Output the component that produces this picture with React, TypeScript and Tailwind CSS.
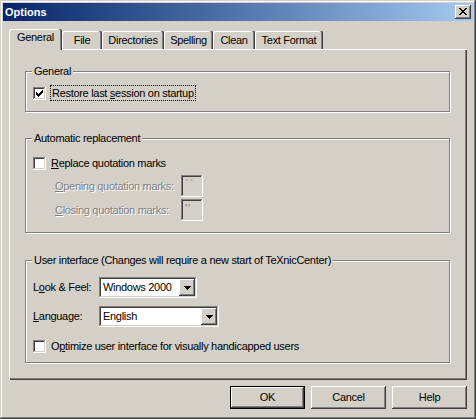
import React from "react";

const raised =
  "shadow-[inset_-1px_-1px_#404040,inset_1px_1px_#ffffff,inset_-2px_-2px_#808080,inset_2px_2px_#d4d0c8]";
const sunken =
  "shadow-[inset_-1px_-1px_#ffffff,inset_1px_1px_#808080,inset_-2px_-2px_#d4d0c8,inset_2px_2px_#404040]";
const etched = "border border-[#808080] shadow-[inset_1px_1px_#ffffff,1px_1px_#ffffff]";

const CheckBox: React.FC<{ checked?: boolean }> = ({ checked }) => (
  <div className={`w-[13px] h-[13px] shrink-0 bg-white ${sunken}`}>
    {checked && (
      <svg width="13" height="13" viewBox="0 0 13 13" shapeRendering="crispEdges">
        <path
          d="M3 5h1v3H3zM4 6h1v3H4zM5 7h1v3H5zM6 6h1v3H6zM7 5h1v3H7zM8 4h1v3H8zM9 3h1v3H9z"
          fill="#000"
        />
      </svg>
    )}
  </div>
);

const Group: React.FC<{ title: string; className: string; children: React.ReactNode }> = ({
  title,
  className,
  children,
}) => (
  <div className={`relative ml-[16px] w-[425px] ${etched} ${className}`}>
    <span className="absolute -top-[7px] left-[6px] px-[2px] bg-[#d4d0c8] leading-[13px] whitespace-nowrap">
      {title}
    </span>
    {children}
  </div>
);

const Combo: React.FC<{ value: string; width: string }> = ({ value, width }) => (
  <div className={`${width} h-[21px] bg-white ${sunken} flex items-center pl-[4px] pr-[2px]`}>
    <span className="flex-1 leading-[13px] whitespace-nowrap">{value}</span>
    <div className={`w-[16px] h-[17px] bg-[#d4d0c8] ${raised} flex items-center justify-center`}>
      <svg width="7" height="4" viewBox="0 0 7 4" shapeRendering="crispEdges">
        <path d="M0 0h7v1H0zM1 1h5v1H1zM2 2h3v1H2zM3 3h1v1H3z" fill="#000" />
      </svg>
    </div>
  </div>
);

const QuoteBox: React.FC<{ value: string }> = ({ value }) => (
  <div
    className={`w-[22px] h-[22px] bg-[#d4d0c8] ${sunken} pl-[4px] pt-[3px] text-[#808080] tracking-[1px] [text-shadow:none]`}
  >
    {value}
  </div>
);

const tabs = ["File", "Directories", "Spelling", "Clean", "Text Format"];
const tabWidths = ["w-[40px]", "w-[62px]", "w-[49px]", "w-[42px]", "w-[68px]"];

export default function App() {
  return (
    <div
      className={`w-[476px] h-[419px] bg-[#d4d0c8] p-[3px] flex flex-col text-[11px] leading-[13px] text-black tracking-[-0.3px] font-['Liberation_Sans',Arial,sans-serif] shadow-[inset_-1px_-1px_#404040,inset_1px_1px_#d4d0c8,inset_-2px_-2px_#808080,inset_2px_2px_#ffffff] select-none`}
    >
      {/* Title bar */}
      <div className="h-[18px] flex items-center justify-between pl-[2px] pr-[2px] bg-linear-to-r from-[#0a246a] to-[#a6caf0]">
        <span className="text-white font-bold tracking-normal">Options</span>
        <div className={`w-[16px] h-[14px] bg-[#d4d0c8] ${raised} flex justify-center pt-[3px]`}>
          <svg width="8" height="7" viewBox="0 0 8 7" shapeRendering="crispEdges">
            <path
              d="M0 0h2v1H0zM6 0h2v1H6zM1 1h2v1H1zM5 1h2v1H5zM2 2h4v1H2zM3 3h2v1H3zM2 4h4v1H2zM1 5h2v1H1zM5 5h2v1H5zM0 6h2v1H0zM6 6h2v1H6z"
              fill="#000"
            />
          </svg>
        </div>
      </div>

      <div className="mt-[8px] px-[6px] flex flex-col">
        {/* Tabs */}
        <div className="flex items-end h-[20px]">
          <div className="relative z-10 w-[53px] h-[21px] -mb-[1px] bg-[#d4d0c8] rounded-t-[2px] pt-[2px] text-center shadow-[inset_-1px_0_#404040,inset_-2px_0_#808080,inset_1px_1px_#ffffff]">
            General
          </div>
          {tabs.map((t, i) => (
            <div
              key={t}
              className={`${tabWidths[i]} h-[18px] rounded-t-[2px] pt-[3px] text-center whitespace-nowrap shadow-[inset_-1px_0_#404040,inset_-2px_0_#808080,inset_1px_1px_#ffffff]`}
            >
              {t}
            </div>
          ))}
        </div>

        {/* Panel */}
        <div className="h-[331px] flex flex-col shadow-[inset_1px_1px_#ffffff,inset_-1px_-1px_#404040,inset_-2px_-2px_#808080]">
          <Group title="General" className="mt-[22px] h-[41px] pt-[13px] pl-[7px]">
            <div className="flex items-start">
              <div className="mt-[2px]">
                <CheckBox checked />
              </div>
              <div className="ml-[4px] border border-dotted border-black px-[1px] leading-[14px]">
                Restore last <u>s</u>ession on startup
              </div>
            </div>
          </Group>

          <Group title="Automatic replacement" className="mt-[26px] h-[95px] pt-[18px] pl-[7px]">
            <div className="flex items-center h-[13px]">
              <CheckBox />
              <span className="ml-[5px]">
                <u>R</u>eplace quotation marks
              </span>
            </div>
            <div className="mt-[5px] ml-[22px] flex items-center h-[22px] text-[#808080] [text-shadow:1px_1px_0_#ffffff]">
              <span className="w-[126px]">
                <u>O</u>pening quotation marks:
              </span>
              <QuoteBox value="``" />
            </div>
            <div className="mt-[2px] ml-[22px] flex items-center h-[22px] text-[#808080] [text-shadow:1px_1px_0_#ffffff]">
              <span className="w-[126px]">
                <u>C</u>losing quotation marks:
              </span>
              <QuoteBox value="''" />
            </div>
          </Group>

          <Group
            title="User interface (Changes will require a new start of TeXnicCenter)"
            className="mt-[27px] h-[103px] pt-[16px] pl-[7px]"
          >
            <div className="flex items-center">
              <span className="w-[66px]">
                L<u>o</u>ok &amp; Feel:
              </span>
              <Combo value="Windows 2000" width="w-[98px]" />
            </div>
            <div className="mt-[8px] flex items-center">
              <span className="w-[66px]">
                <u>L</u>anguage:
              </span>
              <Combo value="English" width="w-[120px]" />
            </div>
            <div className="mt-[13px] flex items-center h-[13px]">
              <CheckBox />
              <span className="ml-[5px]">
                O<u>p</u>timize user interface for visually handicapped users
              </span>
            </div>
          </Group>
        </div>

        {/* Buttons */}
        <div className="mt-[6px] flex justify-end gap-[6px]">
          <div className="w-[75px] h-[23px] border border-black">
            <div className={`w-full h-full flex items-center justify-center ${raised}`}>OK</div>
          </div>
          <div className={`w-[75px] h-[23px] flex items-center justify-center ${raised}`}>Cancel</div>
          <div className={`w-[75px] h-[23px] flex items-center justify-center ${raised}`}>Help</div>
        </div>
      </div>
    </div>
  );
}
